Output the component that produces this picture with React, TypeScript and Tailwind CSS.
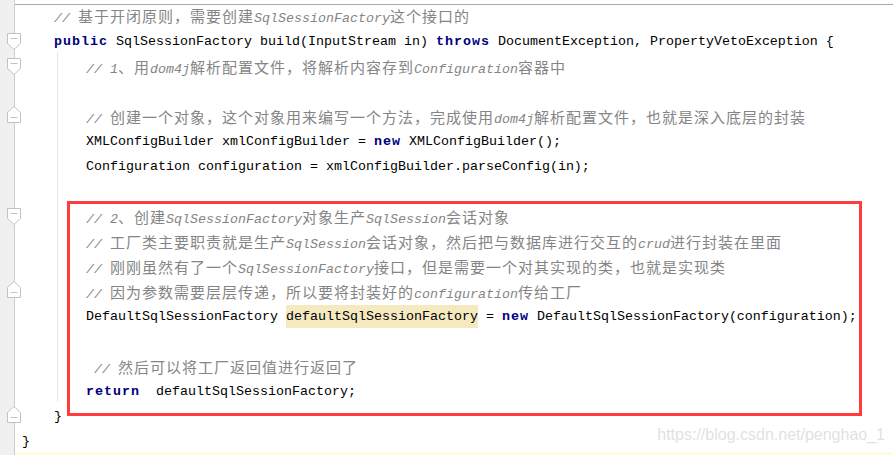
import React from "react";

type Kind = "kw" | "c" | "hl" | "n";
type Seg = { t: string; k: Kind };
type Line = { segs: Seg[]; fold?: "start" | "end"; guide?: boolean; current?: boolean };

const CJK = /([\u2E80-\u9FFF\u3000-\u303F\uFF00-\uFFEF]+)/;

function Mixed({ text, comment }: { text: string; comment?: boolean }) {
  const parts = text.split(CJK).filter((p) => p.length > 0);
  return (
    <>
      {parts.map((p, i) =>
        CJK.test(p) ? (
          <span
            key={i}
            className="font-['Noto_Sans_CJK_SC',sans-serif] text-[15px] tracking-[1px] not-italic"
          >
            {p}
          </span>
        ) : (
          <span key={i} className={comment ? "italic" : ""}>
            {p}
          </span>
        )
      )}
    </>
  );
}

const n = (t: string): Seg => ({ t, k: "n" });
const kw = (t: string): Seg => ({ t, k: "kw" });
const c = (t: string): Seg => ({ t, k: "c" });
const hl = (t: string): Seg => ({ t, k: "hl" });

const I1 = "    ";
const I2 = "        ";

const lines: Line[] = [
  { segs: [n(I1), c("// 基于开闭原则，需要创建SqlSessionFactory这个接口的")] },
  {
    segs: [
      n(I1),
      kw("public"),
      n(" SqlSessionFactory build(InputStream in) "),
      kw("throws"),
      n(" DocumentException, PropertyVetoException {"),
    ],
    fold: "start",
  },
  { segs: [n(I2), c("// 1、用dom4j解析配置文件，将解析内容存到Configuration容器中")], fold: "start", guide: true },
  { segs: [], guide: true },
  {
    segs: [n(I2), c("// 创建一个对象，这个对象用来编写一个方法，完成使用dom4j解析配置文件，也就是深入底层的封装")],
    fold: "end",
    guide: true,
  },
  { segs: [n(I2 + "XMLConfigBuilder xmlConfigBuilder = "), kw("new"), n(" XMLConfigBuilder();")], guide: true },
  { segs: [n(I2 + "Configuration configuration = xmlConfigBuilder.parseConfig(in);")], guide: true },
  { segs: [], guide: true },
  { segs: [n(I2), c("// 2、创建SqlSessionFactory对象生产SqlSession会话对象")], fold: "start", guide: true },
  { segs: [n(I2), c("// 工厂类主要职责就是生产SqlSession会话对象，然后把与数据库进行交互的crud进行封装在里面")], guide: true },
  { segs: [n(I2), c("// 刚刚虽然有了一个SqlSessionFactory接口，但是需要一个对其实现的类，也就是实现类")], guide: true },
  { segs: [n(I2), c("// 因为参数需要层层传递，所以要将封装好的configuration传给工厂")], fold: "end", guide: true },
  {
    segs: [
      n(I2 + "DefaultSqlSessionFactory "),
      hl("defaultSqlSessionFactory"),
      n(" = "),
      kw("new"),
      n(" DefaultSqlSessionFactory(configuration);"),
    ],
    guide: true,
  },
  { segs: [], guide: true },
  { segs: [n(I2 + " "), c("// 然后可以将工厂返回值进行返回了")], guide: true },
  { segs: [n(I2), kw("return"), n("  defaultSqlSessionFactory;")], guide: true },
  { segs: [n(I1 + "}")], fold: "end" },
  { segs: [n("}")] },
  { segs: [], current: true },
];

function FoldMarker({ kind }: { kind: "start" | "end" }) {
  if (kind === "start") {
    return (
      <svg
        className="absolute left-[7px] top-[6px] z-10"
        width="15"
        height="18"
        viewBox="0 0 15 18"
      >
        <path d="M0.5 0.5 H13.5 V10.5 L7 16.5 L0.5 10.5 Z" fill="#ffffff" stroke="#c2c2c2" />
        <path d="M3.5 5.5 H10.5" stroke="#c2c2c2" />
      </svg>
    );
  }
  return (
    <svg
      className="absolute left-[7px] top-[4px] z-10"
      width="15"
      height="18"
      viewBox="0 0 15 18"
    >
      <path d="M0.5 16.5 H13.5 V6.5 L7 0.5 L0.5 6.5 Z" fill="#ffffff" stroke="#c2c2c2" />
      <path d="M3.5 11.5 H10.5" stroke="#c2c2c2" />
    </svg>
  );
}

function SegView({ s }: { s: Seg }) {
  if (s.k === "kw")
    return <span className="font-bold text-[#000080] tracking-[1px]">{s.t}</span>;
  if (s.k === "c")
    return (
      <span className="text-[#858585]">
        <Mixed text={s.t} comment />
      </span>
    );
  if (s.k === "hl")
    return <span className="inline-block bg-[#f5eabf] leading-[23px]">{s.t}</span>;
  return <Mixed text={s.t} />;
}

function Gutter({ children }: { children?: React.ReactNode }) {
  return (
    <div className="relative w-[15px] shrink-0 bg-[#f0f0f0] border-r border-[#cdcdcd]">
      {children}
    </div>
  );
}

export default function App() {
  return (
    <div className="relative w-[893px] h-[455px] overflow-hidden bg-white">
      <div className="flex flex-col">
        <div className="flex h-[4px]">
          <Gutter />
          <div className="flex-1" />
        </div>
        <div className="flex h-[1px]">
          <Gutter />
          <div className="flex-1 bg-[#a9a9a9]" />
        </div>
        {lines.map((ln, i) => (
          <div key={i} className={`flex ${i === 0 ? "h-[22px]" : "h-[25px]"}`}>
            <Gutter>{ln.fold ? <FoldMarker kind={ln.fold} /> : null}</Gutter>
            <div
              className={`relative flex-1 pl-[7px] whitespace-pre text-black font-['Liberation_Mono',monospace] text-[13.333px] ${
                i === 0 ? "leading-[18px]" : "leading-[25px]"
              } ${ln.current ? "bg-[#fffae3]" : ""}`}
            >
              {ln.guide ? (
                <span className="absolute left-[42px] top-0 bottom-0 w-px bg-[#e6e6e6]" />
              ) : null}
              <span className="relative top-[2px]">
                {ln.segs.map((s, j) => (
                  <SegView key={j} s={s} />
                ))}
              </span>
            </div>
          </div>
        ))}
      </div>

      <div className="absolute left-[67px] top-[201px] w-[795px] h-[215px] border-[3px] border-[#ff3b3b] pointer-events-none" />

      <div className="absolute right-[8px] top-[427px] font-['Liberation_Sans',sans-serif] text-[16px] leading-none text-[#e2e2e2]">
        https://blog.csdn.net/penghao_1
      </div>
    </div>
  );
}
